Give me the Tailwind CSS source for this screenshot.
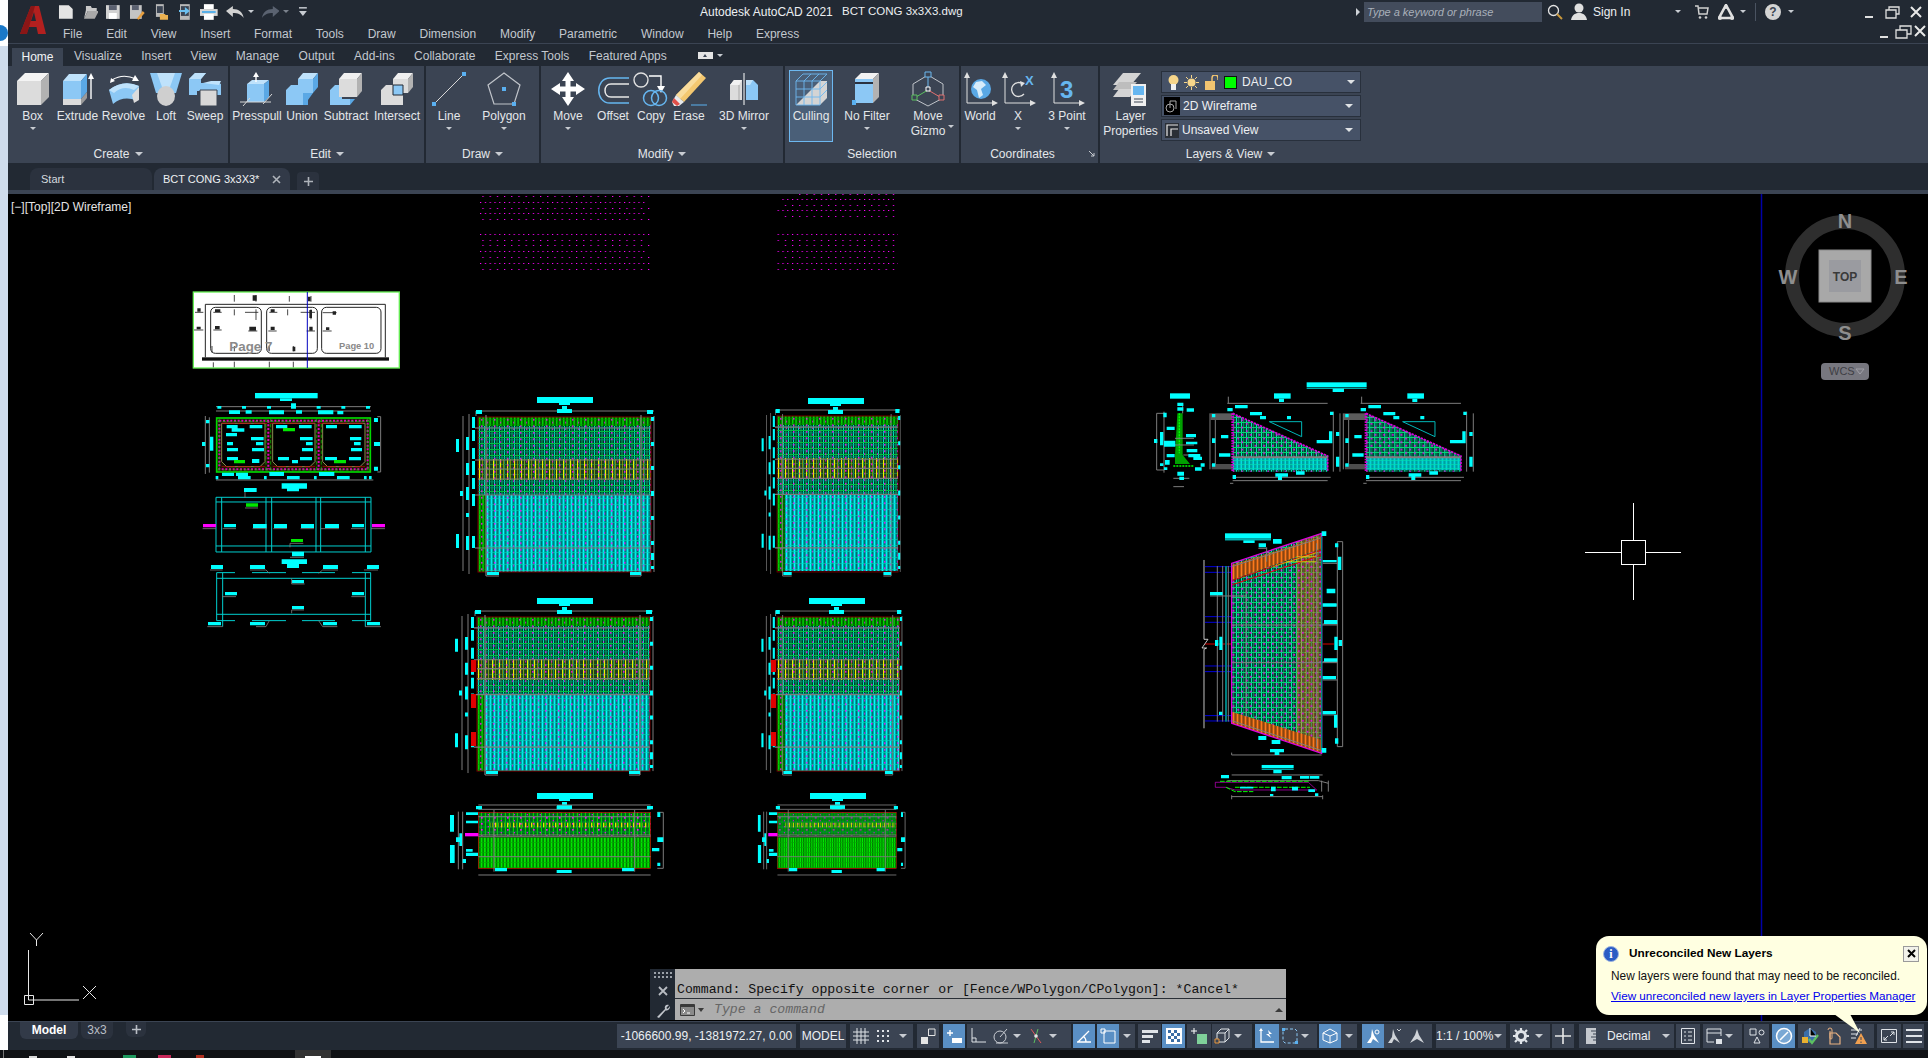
<!DOCTYPE html>
<html lang="en">
<head>
<meta charset="UTF-8">
<title>Autodesk AutoCAD 2021 - BCT CONG 3x3X3.dwg</title>
<script src="https://cdn.jsdelivr.net/npm/@tailwindcss/browser@4"></script>
</head>
<body class="w-[1928px] h-[1058px] overflow-hidden bg-[#101215] text-[12px] text-[#dfe3e8] font-['Liberation_Sans',sans-serif]">
<div class="flex h-[1050px]">
  <!-- desktop sliver on the left -->
  <aside class="w-2 flex flex-col bg-[#cfdcec]">
    <div class="h-[46px] bg-white flex items-center"><div class="w-2 h-4 mt-5 rounded-r-full bg-[#1a78c8]"></div></div>
    <div class="flex-1"></div>
    <div class="h-[35px] bg-white"></div>
  </aside>

  <main class="w-[1920px] flex flex-col relative">
    <!-- title + menu -->
    <header class="h-[44px] flex bg-[#222933] border-b border-[#3b4453]">
      <div class="w-[48px] flex justify-center pt-[5px] pl-[1px]">
        <svg class="w-[26px] h-[30px]" viewBox="0 0 26 30"><path d="M0 29 L11 1 H19 L26 29 H18 L16.5 22 H9 L6.5 29Z" fill="#b3201f"/><path d="M11 1 H15 L7 29 H0Z" fill="#8a1616"/><path d="M11 16 L14 7 L16 16Z" fill="#222933"/></svg>
      </div>
      <div class="flex-1 flex flex-col">
        <div class="h-[22px] flex items-center pt-px">
          <div class="flex items-center w-[252px] pl-[2px]">
            <svg class="w-4 h-4 mr-[9px]" viewBox="0 0 16 16"><path d="M1 1H11L15 5V15H1Z" fill="#e4e4e4"/></svg>
            <svg class="w-4 h-4 mr-[7px]" viewBox="0 0 16 16"><path d="M3 2H8L9 4H14V7H5L1 15 3 6Z" fill="#c9c9c9"/><path d="M5 7H16L12 15H1Z" fill="#a9a9a9"/></svg>
            <svg class="w-4 h-4 mr-2" viewBox="0 0 16 16"><path d="M1 1H15V15H1Z" fill="#d2d2d2"/><path d="M4 1H12V6H4Z" fill="#5a6070"/><path d="M4 9H12V15H4Z" fill="#fff"/></svg>
            <svg class="w-4 h-4 mr-2" viewBox="0 0 16 16"><path d="M1 1H13V15H1Z" fill="#c4c4c4"/><path d="M3 1H10V6H3Z" fill="#5a6070"/><path d="M8 15 L14 7 L16 9 L10 16Z" fill="#e8a040"/></svg>
            <svg class="w-4 h-4 mr-[11px]" viewBox="0 0 16 16"><path d="M3 0H11V13H3Z" fill="#b9b9b9"/><path d="M4 2H10V9H4Z" fill="#3b4453"/><path d="M7 10H12L13 11H16V16H7Z" fill="#eab050"/></svg>
            <svg class="w-3 h-4 mr-[9px]" viewBox="0 0 12 16"><path d="M1 0H11V16H1Z" fill="#b9b9b9"/><path d="M2 2H10V12H2Z" fill="#3b4453"/><path d="M0 6H6V3L11 7 6 11V8H0Z" fill="#6cc0f0"/></svg>
            <svg class="w-[18px] h-4 mr-2" viewBox="0 0 18 16"><path d="M4 0H14V5H4Z" fill="#fff"/><path d="M0 5H18V12H0Z" fill="#d8d8d8"/><path d="M4 10H14V16H4Z" fill="#fff"/><path d="M2 7H16V9H2Z" fill="#5ab0e8"/></svg>
            <svg class="w-[18px] h-3 mr-1" viewBox="0 0 18 12"><path d="M7 0V3C13 3 17 6 18 12 15 8 12 7 7 7V11L0 5Z" fill="#d2d2d2"/></svg>
            <span class="border-x-[3px] border-t-[3px] border-x-transparent border-t-[#c8ccd2] mr-2"></span>
            <svg class="w-[18px] h-3 mr-1" viewBox="0 0 18 12"><path d="M11 0V3C5 3 1 6 0 12 3 8 6 7 11 7V11L18 5Z" fill="#5a6270"/></svg>
            <span class="border-x-[3px] border-t-[3px] border-x-transparent border-t-[#7a818c] mr-[9px]"></span>
            <svg class="w-[10px] h-3" viewBox="0 0 10 12"><path d="M1 1H9V2.5H1Z" fill="#c8ccd2"/><path d="M1 5H9L5 10Z" fill="#c8ccd2"/></svg>
          </div>
          <span class="ml-[392px] w-[142px] text-[#eceff2] whitespace-nowrap">Autodesk AutoCAD 2021</span>
          <span class="text-[#eceff2] text-[11.5px] whitespace-nowrap w-[514px]">BCT CONG 3x3X3.dwg</span>
          <span class="border-y-[4px] border-l-[4px] border-y-transparent border-l-[#cfd3d8] mr-[4px]"></span>
          <div class="w-[178px] h-5 bg-[#434c5c] italic text-[11px] text-[#a9b0ba] pl-[3px] leading-5 whitespace-nowrap">Type a keyword or phrase</div>
          <svg class="w-4 h-4 ml-[5px]" viewBox="0 0 16 16"><circle cx="6.5" cy="6.5" r="5" fill="none" stroke="#e4e4e4" stroke-width="1.3"/><path d="M10 10L15 15" stroke="#c8963c" stroke-width="2"/></svg>
          <svg class="w-[18px] h-[18px] ml-[7px]" viewBox="0 0 18 18"><circle cx="9" cy="5" r="4.5" fill="#e0e0e0"/><path d="M1 17C2 11 6 10 9 10S16 11 17 17Z" fill="#e0e0e0"/></svg>
          <span class="ml-[5px] w-[82px] text-[#eceff2]">Sign In</span>
          <span class="border-x-[3px] border-t-[3px] border-x-transparent border-t-[#c8ccd2] mr-[14px]"></span>
          <svg class="w-[14px] h-[14px] mr-[9px]" viewBox="0 0 14 14"><path d="M0 1H3L4 9H12L13 3H4" fill="none" stroke="#cfcfcf" stroke-width="1.5"/><circle cx="5" cy="12.5" r="1.3" fill="#cfcfcf"/><circle cx="11" cy="12.5" r="1.3" fill="#cfcfcf"/></svg>
          <svg class="w-4 h-4 mr-[6px]" viewBox="0 0 16 16"><path d="M8 1L15 14H1Z" fill="none" stroke="#e0e0e0" stroke-width="2.6"/><circle cx="8" cy="3" r="2" fill="#e0e0e0"/><circle cx="2" cy="14" r="2" fill="#e0e0e0"/><circle cx="14" cy="14" r="2" fill="#e0e0e0"/></svg>
          <span class="border-x-[3px] border-t-[3px] border-x-transparent border-t-[#c8ccd2] mr-[9px]"></span>
          <div class="w-px h-[18px] bg-[#4a5361] mr-[9px]"></div>
          <div class="w-4 h-4 rounded-full bg-[#d4d4d4] text-[#3b4453] font-bold text-[12px] leading-4 text-center mr-[7px]">?</div>
          <span class="border-x-[3px] border-t-[3px] border-x-transparent border-t-[#c8ccd2] mr-[71px]"></span>
          <svg class="w-[60px] h-[14px]" viewBox="0 0 60 14"><path d="M0 12H8" stroke="#e0e0e0" stroke-width="2"/><path d="M21 5H31V13H21ZM24 5V2H34V9H31" fill="none" stroke="#e0e0e0" stroke-width="1.3"/><path d="M46 2L56 12M56 2L46 12" stroke="#e8e8e8" stroke-width="2"/></svg>
        </div>
        <div class="h-[21px] flex items-center relative pt-[2px]">
          <nav class="flex gap-[23.8px] pl-[7px] text-[#c3c8cf] whitespace-nowrap">
            <span>File</span><span>Edit</span><span>View</span><span>Insert</span><span>Format</span><span>Tools</span><span>Draw</span><span>Dimension</span><span>Modify</span><span>Parametric</span><span>Window</span><span>Help</span><span>Express</span>
          </nav>
          <svg class="absolute right-[2px] top-[2px] w-[46px] h-[15px]" viewBox="0 0 46 15"><path d="M0 13H8" stroke="#e0e0e0" stroke-width="2"/><path d="M16 6H27V14H16ZM20 6V2H31V10H27" fill="none" stroke="#e0e0e0" stroke-width="1.3"/><path d="M35 2L45 12M45 2L35 12" stroke="#e8e8e8" stroke-width="2"/></svg>
        </div>
      </div>
    </header>

    <!-- ribbon tabs -->
    <div class="h-[22px] flex items-end bg-[#222933] text-[#c3c8cf] whitespace-nowrap">
      <div class="ml-[4px] w-[51px] h-[18px] bg-[#3b4453] text-[#f2f4f6] text-center leading-[18px]">Home</div>
      <nav class="flex gap-[19.4px] pl-[11px] h-[22px] items-center pt-px">
        <span>Visualize</span><span>Insert</span><span>View</span><span>Manage</span><span>Output</span><span>Add-ins</span><span>Collaborate</span><span>Express Tools</span><span>Featured Apps</span>
      </nav>
      <div class="h-[22px] flex items-center ml-[31px]">
        <div class="w-[15px] h-[7px] bg-[#e4e4e4] flex justify-center items-center"><span class="border-x-[2px] border-b-[3px] border-x-transparent border-b-[#3b4453]"></span></div>
        <span class="ml-[4px] border-x-[3px] border-t-[3px] border-x-transparent border-t-[#c8ccd2]"></span>
      </div>
    </div>

    <!-- ribbon panels -->
    <section class="h-[97px] flex gap-[2px] bg-[#222933] text-[#e4e7ea] whitespace-nowrap">
      <!-- Create -->
      <div class="w-[220px] bg-[#3b4453] flex flex-col">
        <div class="h-[79px] flex pl-[2px] pt-[5px]">
          <div class="w-[45px] flex flex-col items-center">
            <svg class="w-9 h-9" viewBox="0 0 36 36"><path d="M2 10L10 2H34L26 10Z" fill="#f4f4f4"/><path d="M2 10H26V34H2Z" fill="#dcdcdc"/><path d="M26 10L34 2V26L26 34Z" fill="#b2b2b2"/></svg>
            <span class="mt-[2px] leading-[15px]">Box</span><span class="mt-[3px] border-x-[3px] border-t-[3px] border-x-transparent border-t-[#c8ccd2]"></span>
          </div>
          <div class="w-[45px] flex flex-col items-center">
            <svg class="w-9 h-9" viewBox="0 0 36 36"><path d="M3 10L9 3H27L21 10Z" fill="#bfe2fb"/><path d="M3 10H21V28H3Z" fill="#8cc8f5"/><path d="M21 10L27 3V21L21 28Z" fill="#5aa8e5"/><path d="M3 28H21V34H3Z" fill="#dcdcdc"/><path d="M21 28L27 21V27L21 34Z" fill="#9a9a9a"/><path d="M31 28V7" stroke="#fff" stroke-width="1.4"/><path d="M28 8L31 2 34 8Z" fill="#fff"/></svg>
            <span class="mt-[2px] leading-[15px]">Extrude</span>
          </div>
          <div class="w-[47px] flex flex-col items-center">
            <svg class="w-9 h-9" viewBox="0 0 36 36"><path d="M3 19Q17 8 33 15L31 30Q18 24 7 33Z" fill="#8cc8f5"/><path d="M3 19Q17 8 33 15L28 19Q17 14 8 22Z" fill="#bfe2fb"/><path d="M26 24L33 16V29L28 32Z" fill="#dcdcdc"/><path d="M6 9Q17 2 30 8" fill="none" stroke="#fff" stroke-width="1.2"/><path d="M29 4L33 10 26 10Z" fill="#fff"/><path d="M4 12L5 7 9 10Z" fill="#fff"/></svg>
            <span class="mt-[2px] leading-[15px]">Revolve</span>
          </div>
          <div class="w-[38px] flex flex-col items-center">
            <svg class="w-9 h-9" viewBox="0 0 36 36"><path d="M2 2H34L28 22H8Z" fill="#8cc8f5"/><path d="M9 2H27L22 16H14Z" fill="#bfe2fb"/><ellipse cx="18" cy="25" rx="9" ry="10" fill="#cfcfcf"/></svg>
            <span class="mt-[2px] leading-[15px]">Loft</span>
          </div>
          <div class="w-[40px] flex flex-col items-center">
            <svg class="w-9 h-9" viewBox="0 0 36 36"><path d="M2 8L8 2H19L14 8 14 12H32L34 13V24H24V20H10V24H2Z" fill="#8cc8f5"/><path d="M2 8L8 2H19L14 8Z" fill="#bfe2fb"/><path d="M16 12L24 10H34L32 14Z" fill="#bfe2fb"/><path d="M13 19H30V35H13Z" fill="#d8d8d8" stroke="#3b4453"/></svg>
            <span class="mt-[2px] leading-[15px]">Sweep</span>
          </div>
        </div>
        <div class="h-[17px] flex items-center justify-center gap-[5px]"><span>Create</span><span class="border-x-[4px] border-t-[4px] border-x-transparent border-t-[#c8ccd2]"></span></div>
      </div>
      <!-- Edit -->
      <div class="w-[194px] bg-[#3b4453] flex flex-col">
        <div class="h-[79px] flex pl-[2px] pt-[5px]">
          <div class="w-[50px] flex flex-col items-center">
            <svg class="w-9 h-9" viewBox="0 0 36 36"><path d="M8 13L13 9H30L25 13Z" fill="#bfe2fb"/><path d="M8 13H25V31H8Z" fill="#8cc8f5"/><path d="M25 13L30 9V26L25 31Z" fill="#5aa8e5"/><path d="M1 31H32M4 35L11 27M24 33L33 23" stroke="#d8d8d8"/><path d="M17 11V5" stroke="#fff" stroke-width="1.4"/><path d="M14 6L17 1 20 6Z" fill="#fff"/></svg>
            <span class="mt-[2px] leading-[15px]">Presspull</span>
          </div>
          <div class="w-[40px] flex flex-col items-center">
            <svg class="w-9 h-9" viewBox="0 0 36 36"><path d="M14 8L19 2H34L29 8Z" fill="#bfe2fb"/><path d="M14 8H29V22H14Z" fill="#8cc8f5"/><path d="M29 8L34 2V16L29 22Z" fill="#5aa8e5"/><path d="M2 19L7 14H14V22H24L19 34H2Z" fill="#8cc8f5"/><path d="M19 22H29L24 29V34H19Z" fill="#5aa8e5"/></svg>
            <span class="mt-[2px] leading-[15px]">Union</span>
          </div>
          <div class="w-[48px] flex flex-col items-center">
            <svg class="w-9 h-9" viewBox="0 0 36 36"><path d="M2 19L7 14H14V28H22V34H2Z" fill="#8cc8f5"/><path d="M22 28H27L22 34Z" fill="#5aa8e5"/><path d="M11 8L16 2H34L29 8Z" fill="#f0f0f0"/><path d="M11 8H29V26H11Z" fill="#dcdcdc"/><path d="M29 8L34 2V20L29 26Z" fill="#b2b2b2"/></svg>
            <span class="mt-[2px] leading-[15px]">Subtract</span>
          </div>
          <div class="w-[54px] flex flex-col items-center">
            <svg class="w-9 h-9" viewBox="0 0 36 36"><path d="M14 8L19 2H34L29 8Z" fill="#f0f0f0"/><path d="M14 8H29V22H14Z" fill="#dcdcdc"/><path d="M29 8L34 2V16L29 22Z" fill="#b2b2b2"/><path d="M2 19L7 14H14V22H24V34H2Z" fill="#dcdcdc"/><path d="M14 14H24V24H14Z" fill="#8cc8f5" stroke="#222933"/></svg>
            <span class="mt-[2px] leading-[15px]">Intersect</span>
          </div>
        </div>
        <div class="h-[17px] flex items-center justify-center gap-[5px]"><span>Edit</span><span class="border-x-[4px] border-t-[4px] border-x-transparent border-t-[#c8ccd2]"></span></div>
      </div>
      <!-- Draw -->
      <div class="w-[113px] bg-[#3b4453] flex flex-col">
        <div class="h-[79px] flex pt-[5px]">
          <div class="w-[46px] flex flex-col items-center">
            <svg class="w-9 h-9" viewBox="0 0 36 36"><path d="M3 33L33 3" stroke="#d8d8d8"/><path d="M1 31H5V35H1ZM31 1H35V5H31Z" fill="#5ab0f0"/></svg>
            <span class="mt-[2px] leading-[15px]">Line</span><span class="mt-[3px] border-x-[3px] border-t-[3px] border-x-transparent border-t-[#c8ccd2]"></span>
          </div>
          <div class="w-[64px] flex flex-col items-center">
            <svg class="w-9 h-9" viewBox="0 0 36 36"><path d="M18 2L34 14 28 33H8L2 14Z" fill="none" stroke="#c0c4ca" stroke-width="1.2"/><path d="M16 16H20V20H16ZM26 31H30V35H26Z" fill="#5ab0f0"/></svg>
            <span class="mt-[2px] leading-[15px]">Polygon</span><span class="mt-[3px] border-x-[3px] border-t-[3px] border-x-transparent border-t-[#c8ccd2]"></span>
          </div>
        </div>
        <div class="h-[17px] flex items-center justify-center gap-[5px]"><span>Draw</span><span class="border-x-[4px] border-t-[4px] border-x-transparent border-t-[#c8ccd2]"></span></div>
      </div>
      <!-- Modify -->
      <div class="w-[242px] bg-[#3b4453] flex flex-col">
        <div class="h-[79px] flex pl-[4px] pt-[5px]">
          <div class="w-[46px] flex flex-col items-center">
            <svg class="w-9 h-9" viewBox="0 0 36 36"><path d="M18 1L24 10H20.5V15.5H26V12L35 18 26 24V20.5H20.5V26H24L18 35 12 26H15.5V20.5H10V24L1 18 10 12V15.5H15.5V10H12Z" fill="#fff"/></svg>
            <span class="mt-[2px] leading-[15px]">Move</span><span class="mt-[3px] border-x-[3px] border-t-[3px] border-x-transparent border-t-[#c8ccd2]"></span>
          </div>
          <div class="w-[44px] flex flex-col items-center">
            <svg class="w-9 h-9" viewBox="0 0 36 36"><path d="M34 7H15C0 7 0 32 15 32H34" fill="none" stroke="#66b6f0" stroke-width="1.5"/><path d="M34 13H16C8 13 8 26 16 26H34" fill="none" stroke="#e8e8e8" stroke-width="1.5"/></svg>
            <span class="mt-[2px] leading-[15px]">Offset</span>
          </div>
          <div class="w-[32px] flex flex-col items-center">
            <svg class="w-9 h-9" viewBox="0 0 36 36"><circle cx="8" cy="9" r="7" fill="none" stroke="#e0e0e0" stroke-width="1.4"/><path d="M16 5H28V15" fill="none" stroke="#fff" stroke-width="1.4"/><path d="M24 15H32L28 22Z" fill="#fff"/><circle cx="18" cy="27" r="7.5" fill="none" stroke="#66b6f0" stroke-width="1.5"/><circle cx="26" cy="27" r="7.5" fill="none" stroke="#66b6f0" stroke-width="1.5"/></svg>
            <span class="mt-[2px] leading-[15px]">Copy</span>
          </div>
          <div class="w-[44px] flex flex-col items-center">
            <svg class="w-9 h-9" viewBox="0 0 36 36"><path d="M28 1L35 7 13 31 5 24Z" fill="#f4c870"/><path d="M28 1L31 4 9 28 5 24Z" fill="#f9dc9c"/><path d="M5 24L13 31 8 35H3L1 31Z" fill="#e8eaec"/><path d="M3 27L9 33 6 35 1 31Z" fill="#e0504a"/><path d="M20 34H36" stroke="#5ab0f0"/></svg>
            <span class="mt-[2px] leading-[15px]">Erase</span>
          </div>
          <div class="w-[66px] flex flex-col items-center">
            <svg class="w-9 h-9" viewBox="0 0 36 36"><path d="M4 14L8 9H16V29H4Z" fill="#dcdcdc"/><path d="M4 14L8 9H16L13 14Z" fill="#f2f2f2"/><path d="M13 14V29" stroke="#a8a8a8"/><path d="M18 2V34" stroke="#fff"/><path d="M20 9H27L32 14V29H20Z" fill="#8cc8f5"/><path d="M20 9H27L24 14H20Z" fill="#bfe2fb"/></svg>
            <span class="mt-[2px] leading-[15px]">3D Mirror</span><span class="mt-[3px] border-x-[3px] border-t-[3px] border-x-transparent border-t-[#c8ccd2]"></span>
          </div>
        </div>
        <div class="h-[17px] flex items-center justify-center gap-[5px]"><span>Modify</span><span class="border-x-[4px] border-t-[4px] border-x-transparent border-t-[#c8ccd2]"></span></div>
      </div>
      <!-- Selection -->
      <div class="w-[174px] bg-[#3b4453] flex flex-col">
        <div class="h-[79px] flex pl-[4px] pt-[4px]">
          <div class="w-[44px] h-[72px] flex flex-col items-center bg-[#4a5f78] border border-[#6db8f0]">
            <svg class="w-9 h-9" viewBox="0 0 36 36"><path d="M3 34V10L10 3H34V27L27 34Z" fill="#4a5f78"/><path d="M27 34H3L27 10H34V27Z" fill="#d4d4d4"/><path d="M3 10H27V34H3ZM27 10L34 3H10L3 10M11 10V34M19 10V34M3 18H27M3 26H27M11 10L18 3M19 10L26 3M27 18L34 11M27 26L34 19" fill="none" stroke="#6db8f0" stroke-width=".9"/></svg>
            <span class="mt-[2px] leading-[15px]">Culling</span>
          </div>
          <div class="w-[68px] flex flex-col items-center pt-px">
            <svg class="w-9 h-9" viewBox="0 0 36 36"><path d="M6 8L12 2H30L24 8Z" fill="#f2f2f2"/><path d="M24 8L30 2V26L24 32Z" fill="#b2b2b2"/><path d="M6 8H24V32H6Z" fill="#8cc8f5"/><path d="M6 11H24V13H6Z" fill="#2a3240"/><path d="M3 29H7V34H3Z" fill="#5ab0f0"/></svg>
            <span class="mt-[2px] leading-[15px]">No Filter</span><span class="mt-[3px] border-x-[3px] border-t-[3px] border-x-transparent border-t-[#c8ccd2]"></span>
          </div>
          <div class="w-[54px] flex flex-col items-center pt-px relative">
            <svg class="w-9 h-9" viewBox="0 0 36 36"><path d="M18 4L33 13V27L18 35 3 27V13Z" fill="none" stroke="#c0c4ca"/><path d="M18 6V18" stroke="#6db8f0"/><path d="M18 19L6 26" stroke="#5cc060"/><path d="M18 19L30 26" stroke="#e07070"/><path d="M15 1H21V6H15Z" fill="#3b4453" stroke="#6db8f0"/><path d="M16 16H20V20H16Z" fill="#3b4453" stroke="#fff"/><path d="M2 24H7V29H2Z" fill="#3b4453" stroke="#5cc060"/><path d="M29 24H34V29H29Z" fill="#3b4453" stroke="#e07070"/></svg>
            <span class="mt-[2px] leading-[15px]">Move</span><span class="leading-[15px]">Gizmo</span>
            <span class="absolute right-[1px] top-[55px] border-x-[3px] border-t-[3px] border-x-transparent border-t-[#c8ccd2]"></span>
          </div>
        </div>
        <div class="h-[17px] flex items-center justify-center"><span>Selection</span></div>
      </div>
      <!-- Coordinates -->
      <div class="w-[137px] bg-[#3b4453] flex flex-col">
        <div class="h-[79px] flex pt-[5px]">
          <div class="w-[38px] flex flex-col items-center">
            <svg class="w-9 h-9" viewBox="0 0 36 36"><path d="M5 3V32H33" fill="none" stroke="#e0e0e0"/><path d="M2 7L5 1 8 7ZM30 29L36 32 30 35Z" fill="#e0e0e0"/><circle cx="19" cy="18" r="10" fill="#5aa8e5"/><path d="M14 11L20 10 24 14 19 18 21 24 17 27 15 19 11 16Z" fill="#d6ecfb"/></svg>
            <span class="mt-[2px] leading-[15px]">World</span>
          </div>
          <div class="w-[38px] flex flex-col items-center">
            <svg class="w-9 h-9" viewBox="0 0 36 36"><path d="M5 3V32H33" fill="none" stroke="#e0e0e0"/><path d="M2 7L5 1 8 7ZM30 29L36 32 30 35Z" fill="#e0e0e0"/><path d="M23 13A7 7 0 1 0 24 23" fill="none" stroke="#e0e0e0" stroke-width="1.3"/><path d="M20 10L25 12 21 16Z" fill="#e0e0e0"/><text x="25" y="14" font-size="13" font-weight="700" fill="#66b6f0" font-family="Liberation Sans">X</text></svg>
            <span class="mt-[2px] leading-[15px]">X</span><span class="mt-[3px] border-x-[3px] border-t-[3px] border-x-transparent border-t-[#c8ccd2]"></span>
          </div>
          <div class="w-[60px] flex flex-col items-center">
            <svg class="w-9 h-9" viewBox="0 0 36 36"><path d="M5 3V32H33" fill="none" stroke="#e0e0e0"/><path d="M2 7L5 1 8 7ZM30 29L36 32 30 35Z" fill="#e0e0e0"/><text x="11" y="27" font-size="24" font-weight="700" fill="#66b6f0" font-family="Liberation Sans">3</text></svg>
            <span class="mt-[2px] leading-[15px]">3 Point</span><span class="mt-[3px] border-x-[3px] border-t-[3px] border-x-transparent border-t-[#c8ccd2]"></span>
          </div>
        </div>
        <div class="h-[17px] flex items-center justify-center relative pr-[14px]"><span>Coordinates</span>
          <svg class="absolute right-[3px] top-[5px] w-[7px] h-[7px]" viewBox="0 0 7 7"><path d="M1 1L6 6M3 6H6V3" fill="none" stroke="#c8ccd2"/></svg>
        </div>
      </div>
      <!-- Layers & View -->
      <div class="flex-1 bg-[#3b4453] flex flex-col">
        <div class="h-[79px] flex pt-[5px]">
          <div class="w-[61px] flex flex-col items-center">
            <svg class="w-9 h-9" viewBox="0 0 36 36"><path d="M10 2H28L18 14H0Z" fill="#d4d4d4"/><path d="M6 11H24L17 19H0Z" fill="#bdbdbd"/><path d="M6 18H24L17 26H0Z" fill="#d4d4d4"/><path d="M18 13H33V35H18Z" fill="#f0f0f0"/><path d="M20 15H31V24H20Z" fill="#66b6f0"/><path d="M21 28H30M21 31H30" stroke="#3b4453"/></svg>
            <span class="mt-[2px] leading-[15px]">Layer</span><span class="leading-[15px]">Properties</span>
          </div>
          <div class="w-[200px] flex flex-col gap-[2px]">
            <div class="h-[22px] bg-[#465267] border border-[#28303c] flex items-center pl-[6px] pr-[5px] text-[#eef0f2]">
              <svg class="w-[11px] h-[15px]" viewBox="0 0 11 15"><circle cx="5.5" cy="5" r="5" fill="#f6d58a"/><path d="M3 9H8V15H3Z" fill="#f0f0f0"/></svg>
              <svg class="w-[15px] h-[15px] ml-[5px]" viewBox="0 0 15 15"><circle cx="7.5" cy="7.5" r="4" fill="#f6d58a"/><path d="M7.5 0V3M7.5 12V15M0 7.5H3M12 7.5H15M2 2L4 4M11 11L13 13M2 13L4 11M11 4L13 2" stroke="#f6d58a"/></svg>
              <svg class="w-[14px] h-[15px] ml-[5px]" viewBox="0 0 14 15"><path d="M8 6V3A3 3 0 0 1 14 3V5" fill="none" stroke="#f6c870" stroke-width="1.4"/><path d="M1 6H11V15H1Z" fill="#f2c470"/></svg>
              <div class="w-[13px] h-[13px] bg-[#00ff00] border border-[#111] ml-[6px]"></div>
              <span class="ml-[5px] flex-1">DAU_CO</span>
              <span class="border-x-[4px] border-t-[4px] border-x-transparent border-t-[#e0e3e6]"></span>
            </div>
            <div class="h-[22px] bg-[#465267] border border-[#28303c] flex items-center pl-[2px] pr-[7px] text-[#eef0f2]">
              <svg class="w-4 h-[18px] bg-black" viewBox="0 0 16 18"><circle cx="6" cy="11" r="4" fill="none" stroke="#a8a8a8"/><path d="M6 11V4H12V12" fill="none" stroke="#a8a8a8"/></svg>
              <span class="ml-[3px] flex-1">2D Wireframe</span>
              <span class="border-x-[4px] border-t-[4px] border-x-transparent border-t-[#e0e3e6]"></span>
            </div>
            <div class="h-[22px] bg-[#465267] border border-[#28303c] flex items-center pl-[3px] pr-[7px] text-[#eef0f2]">
              <svg class="w-[14px] h-[15px] bg-[#2a2f36]" viewBox="0 0 14 15"><path d="M2 13V2H13M6 13V6H13" fill="none" stroke="#e8e8e8" stroke-width="1.2"/></svg>
              <span class="ml-[3px] flex-1">Unsaved View</span>
              <span class="border-x-[4px] border-t-[4px] border-x-transparent border-t-[#e0e3e6]"></span>
            </div>
          </div>
        </div>
        <div class="w-[261px] h-[17px] flex items-center justify-center gap-[5px]"><span>Layers &amp; View</span><span class="border-x-[4px] border-t-[4px] border-x-transparent border-t-[#c8ccd2]"></span></div>
      </div>
    </section>

    <!-- file tabs -->
    <div class="h-[27px] flex items-end bg-[#222933] pl-[22px] text-[#d5d9de] text-[11px] whitespace-nowrap">
      <div class="w-[122px] h-[22px] bg-[#2b323e] rounded-t-lg pl-[11px] leading-[22px] mb-0">Start</div>
      <div class="w-[136px] h-[22px] bg-[#323a48] rounded-t-lg ml-[2px] flex items-center pl-[9px] text-[#eef0f2]">
        <span class="w-[109px]">BCT CONG 3x3X3*</span>
        <svg class="w-[9px] h-[9px]" viewBox="0 0 9 9"><path d="M1 1L8 8M8 1L1 8" stroke="#aeb3ba" stroke-width="1.6"/></svg>
      </div>
      <div class="w-[22px] h-[18px] bg-[#2b323e] rounded-t ml-[7px] flex items-center justify-center">
        <svg class="w-[9px] h-[9px]" viewBox="0 0 9 9"><path d="M4.5 0V9M0 4.5H9" stroke="#aeb3ba" stroke-width="1.6"/></svg>
      </div>
    </div>
    <div class="h-1 bg-[#3b4453]"></div>

    <!-- model space -->
    <div class="h-[827px] relative bg-black">
      <svg class="absolute inset-0" width="1920" height="827" viewBox="8 194 1920 827" font-family="Liberation Sans">
        <defs>
          <pattern id="dots7" width="7.2" height="1" patternUnits="userSpaceOnUse"><rect width="1.2" height="1" fill="#ff00ff"/></pattern>
          <pattern id="dots4" width="4.8" height="1" patternUnits="userSpaceOnUse"><rect width="1.2" height="1" fill="#ff00ff"/></pattern>
          <pattern id="gridA" width="5" height="6" patternUnits="userSpaceOnUse"><rect width="5" height="6" fill="#013a2a"/><rect x="1" width="1" height="6" fill="#00e0c0"/><rect x="3.5" width="1" height="6" fill="#00b060"/><rect y="2" width="5" height="1" fill="#00c040"/><rect y="4.5" width="5" height=".7" fill="#00907a"/></pattern>
          <pattern id="gridAn" width="7" height="6" patternUnits="userSpaceOnUse"><rect width="7" height="6" fill="#013a2a"/><rect x="1.4" width="1.4" height="6" fill="#00e0c0"/><rect x="4.9" width="1.4" height="6" fill="#00b060"/><rect y="2" width="7" height="1" fill="#00c040"/><rect y="4.5" width="7" height=".7" fill="#00907a"/></pattern>
          <pattern id="gridB" width="8" height="6" patternUnits="userSpaceOnUse"><rect width="8" height="6" fill="#00a8a8"/><rect x="1" width="1" height="6" fill="#00ffff"/><rect x="3" width="1" height="6" fill="#007c7c"/><rect x="5" width="1" height="6" fill="#00f0f0"/><rect x="7" width="1" height="6" fill="#006e6e"/><rect y="3" width="8" height=".6" fill="#00d8b8"/></pattern>
          <pattern id="gridBn" width="11.4" height="6" patternUnits="userSpaceOnUse"><rect width="11.4" height="6" fill="#00a8a8"/><rect x="1.4" width="1.4" height="6" fill="#00ffff"/><rect x="4.3" width="1.4" height="6" fill="#007c7c"/><rect x="7.1" width="1.4" height="6" fill="#00f0f0"/><rect x="10" width="1.4" height="6" fill="#006e6e"/><rect y="3" width="11.4" height=".6" fill="#00d8b8"/></pattern>
          <pattern id="gridG" width="3.5" height="5" patternUnits="userSpaceOnUse"><rect width="3.5" height="5" fill="#005a00"/><rect x="1" width="1.3" height="5" fill="#00f000"/><rect y="2" width="3.5" height=".5" fill="#009000"/></pattern>
          <pattern id="gridS" width="5" height="5" patternUnits="userSpaceOnUse"><rect width="5" height="5" fill="#02362a"/><rect x="1" width="1" height="5" fill="#00c89a"/><rect y="2" width="5" height="1" fill="#00a860"/></pattern>
          <pattern id="gridS3" width="15" height="15" patternUnits="userSpaceOnUse"><rect width="15" height="15" fill="#024434"/><rect x="3" width="3" height="15" fill="#00f0b0"/><rect x="10" width="2" height="15" fill="#00a868"/><rect y="6" width="15" height="3" fill="#00d870"/></pattern>
          <pattern id="gridO3" width="12" height="12" patternUnits="userSpaceOnUse"><rect width="12" height="12" fill="#8a4410"/><rect x="2" width="5" height="12" fill="#ff7a1c"/></pattern>
          <pattern id="gridB3" width="12" height="12" patternUnits="userSpaceOnUse"><rect width="12" height="12" fill="#00a0a0"/><rect x="2" width="3" height="12" fill="#00ffff"/><rect y="6" width="12" height="2" fill="#00e0b0"/></pattern>
          <pattern id="gridG3" width="10" height="15" patternUnits="userSpaceOnUse"><rect width="10" height="15" fill="#007000"/><rect x="2" width="5" height="15" fill="#00f000"/><rect y="6" width="10" height="2" fill="#00a800"/></pattern>
          <pattern id="gridT3" width="12" height="15" patternUnits="userSpaceOnUse"><rect width="12" height="15" fill="#00500a"/><rect x="2" width="4" height="15" fill="#00d800"/><rect x="8" width="2" height="15" fill="#008848"/><rect y="5" width="12" height="2" fill="#00a040"/></pattern>
          <pattern id="yel" width="7" height="21" patternUnits="userSpaceOnUse"><rect x="1" width="1.1" height="21" fill="#f0f000"/><rect x="4" width=".7" height="21" fill="#a8a800"/></pattern>
          <pattern id="yel3" width="18" height="14" patternUnits="userSpaceOnUse"><rect x="3" width="4" height="14" fill="#e8e800"/><rect x="12" width="2" height="14" fill="#a8a800"/></pattern>
          <pattern id="mag" width="13" height="6.5" patternUnits="userSpaceOnUse"><rect x="3" y="2" width="1.5" height="1.5" fill="#ff00ff"/><rect x="9" y="5" width="1.2" height="1.2" fill="#ff00ff"/></pattern>
          <pattern id="mag3" width="39" height="18" patternUnits="userSpaceOnUse"><rect x="6" y="3" width="5" height="5" fill="#ff00ff"/><rect x="26" y="12" width="4" height="4" fill="#e000e0"/></pattern>
          <pattern id="magS" width="26" height="22" patternUnits="userSpaceOnUse"><rect x="6" y="5" width="5" height="5" fill="#f000f0"/><rect x="18" y="16" width="5" height="5" fill="#f000f0"/></pattern>

          <g id="ptitle"><rect x="-28" y="0" width="56" height="6" fill="#00ffff"/><rect x="-6" y="6" width="11" height="2" fill="#00ffff"/><rect x="-3" y="9" width="5" height="3" fill="#00ffff"/><rect x="-8" y="12" width="15" height="4" fill="#00ffff"/></g>

          <g id="fillW">
            <rect width="173" height="155" fill="url(#gridA)"/>
            <rect width="173" height="9" fill="url(#gridG)"/>
            <rect y="42" width="173" height="21" fill="#3a4a10"/>
            <rect y="42" width="173" height="21" fill="url(#gridS)" opacity=".5"/>
            <rect y="42" width="173" height="21" fill="url(#yel)"/>
            <rect y="78" width="173" height="77" fill="url(#gridB)"/>
            <rect y="78" width="8" height="77" fill="url(#gridG)"/>
            <rect width="173" height="155" fill="url(#mag)"/>
          </g>
          <g id="fillN">
            <rect width="173" height="155" fill="url(#gridAn)"/>
            <rect width="173" height="9" fill="url(#gridG)"/>
            <rect y="42" width="173" height="21" fill="#3a4a10"/>
            <rect y="42" width="173" height="21" fill="url(#yel)"/>
            <rect y="78" width="173" height="77" fill="url(#gridBn)"/>
            <rect y="78" width="11" height="77" fill="url(#gridG)"/>
            <rect width="173" height="155" fill="url(#mag)"/>
          </g>
          <g id="panel">
            <rect width="173" height="155" fill="none" stroke="#7a0000"/>
            <path d="M-3 11H173M-3 43H173M0 52H173M0 62H173M-3 78H173M-3 131H173M8 -2V159M163 -2V159" stroke="#7c7c7c" stroke-width="1.2" fill="none"/>
            <path d="M-2 -6H176M-2 -6V-1M-15 -1V154M-9 -3V157M176 -1V155M8 159H21M152 159H163" stroke="#7c7c7c" fill="none"/>
            <path d="M-2 -7h6v4h-6zM169 -7h6v4h-6zM-12 20h3v13h-3zM-12 46h3v12h-3zM-12 70h3v13h-3zM-12 119h3v14h-3zM-12 96h3v4h-3zM-6 0h3v11h-3zM-6 13h3v11h-3zM-6 31h3v11h-3zM-6 44h3v14h-3zM-6 61h3v11h-3zM-6 77h3v12h-3zM-6 119h3v12h-3zM-22 22h3v13h-3zM-22 117h3v14h-3zM-18 74h3v5h-3zM173 0h3v4h-3zM173 25h3v4h-3zM173 49h3v4h-3zM173 74h3v5h-3zM173 99h3v4h-3zM173 124h3v4h-3zM173 136h3v7h-3zM173 149h3v3h-3zM9 155h12v3h-12zM152 155h11v3h-11z" fill="#00ffff"/>
          </g>

          <g id="low">
            <rect x="115" y="97" width="517" height="70" fill="url(#gridT3)"/>
            <rect x="115" y="97" width="517" height="70" fill="url(#mag3)"/>
            <rect x="115" y="172" width="517" height="93" fill="url(#gridG3)"/>
            <rect x="150" y="128" width="482" height="14" fill="url(#yel3)"/>
            <rect x="115" y="97" width="517" height="168" fill="none" stroke="#d00000" stroke-width="2"/>
            <path d="M115 110H632M115 165H632M115 170H632M115 230H632M162 90V275M584 90V275" stroke="#7c7c7c" stroke-width="3" fill="none"/>
            <path d="M115 75H632M115 88H632M115 285H632M55 95V268M68 95V268M670 97V265M652 97H670M652 265H670" stroke="#7c7c7c" stroke-width="3" fill="none"/>
            <path d="M108 78h18v10h-18zM350 78h45v10h-45zM621 78h18v10h-18zM350 270h45v9h-45zM165 264h36v10h-36zM546 264h36v10h-36zM30 105h12v50h-12zM30 195h14v54h-14zM58 160h8v38h-8zM48 172h10v14h-10zM78 97h36v8h-36zM78 122h36v8h-36zM78 207h20v8h-20zM78 218h36v10h-36zM68 237h10v12h-10zM652 97h9v14h-9zM652 172h18v14h-18zM636 204h22v10h-22zM652 248h9v10h-9z" fill="#00ffff"/>
            <rect x="75" y="159" width="40" height="10" fill="#ff00ff"/>
          </g>

          <g id="tri">
            <rect x="402" y="70" width="50" height="16" fill="#00ffff"/><rect x="417" y="86" width="15" height="10" fill="#00ffff"/>
            <path d="M212 130H278V150H212Z" fill="#5c5c5c"/>
            <path d="M215 282H278V298H215Z" fill="#4c4c4c"/>
            <path d="M278 130L563 258V305H278Z" fill="url(#gridS3)"/>
            <path d="M278 130L563 258V305H278Z" fill="url(#magS)"/>
            <path d="M278 262H563V300H278Z" fill="url(#gridB3)"/>
            <path d="M278 130L563 258V305" fill="none" stroke="#e000e0" stroke-width="5" stroke-dasharray="7 3"/>
            <path d="M278 130V305" stroke="#d000d0" stroke-width="8" stroke-dasharray="5 3"/>
            <path d="M278 262H563" stroke="#808080" stroke-width="6"/>
            <path d="M262 100H563M210 130V298M226 150V282M278 322H572M278 332H563M580 125V305M600 130V305M265 80V100M270 340H280" stroke="#7c7c7c" stroke-width="3" fill="none"/>
            <path d="M388 155H485V200Z" fill="none" stroke="#00b8b8" stroke-width="3"/>
            <path d="M285 105h38v10h-38zM330 126h36v10h-36zM360 138h18v10h-18zM441 138h12v10h-12zM243 195h22v10h-22zM237 250h34v10h-34zM530 210h38v10h-38zM216 132h10v10h-10zM216 205h10v14h-10zM216 280h10v10h-10zM406 310h38v10h-38zM414 320h12v10h-12zM468 304h26v10h-26zM570 125h10v10h-10zM567 184h10v36h-10zM588 186h10v12h-10zM588 260h10v30h-10zM262 114h16v10h-16zM278 315h10v12h-10z" fill="#00ffff"/>
          </g>
        </defs>

        <!-- magenta dot rows above the panels -->
        <g>
          <rect x="479" y="196" width="171" height="1" fill="url(#dots7)"/><rect x="479" y="202" width="167" height="1" fill="url(#dots4)"/><rect x="482" y="208" width="168" height="1" fill="url(#dots7)"/><rect x="479" y="213" width="168" height="1" fill="url(#dots4)"/><rect x="479" y="219" width="171" height="1" fill="url(#dots7)"/>
          <rect x="479" y="234" width="171" height="1" fill="url(#dots4)"/><rect x="479" y="240" width="167" height="1" fill="url(#dots7)"/><rect x="482" y="245" width="168" height="1" fill="url(#dots7)"/><rect x="479" y="251" width="167" height="1" fill="url(#dots4)"/><rect x="482" y="257" width="168" height="1" fill="url(#dots7)"/><rect x="479" y="263" width="171" height="1" fill="url(#dots4)"/><rect x="479" y="269" width="171" height="1" fill="url(#dots7)"/>
          <rect x="794" y="194" width="104" height="1" fill="url(#dots7)"/><rect x="782" y="199" width="112" height="1" fill="url(#dots4)"/><rect x="780" y="205" width="118" height="1" fill="url(#dots7)"/><rect x="777" y="210" width="118" height="1" fill="url(#dots4)"/><rect x="780" y="216" width="118" height="1" fill="url(#dots7)"/>
          <rect x="777" y="234" width="121" height="1" fill="url(#dots4)"/><rect x="777" y="240" width="118" height="1" fill="url(#dots7)"/><rect x="780" y="245" width="118" height="1" fill="url(#dots7)"/><rect x="777" y="251" width="118" height="1" fill="url(#dots4)"/><rect x="780" y="257" width="118" height="1" fill="url(#dots7)"/><rect x="777" y="263" width="121" height="1" fill="url(#dots4)"/><rect x="777" y="269" width="121" height="1" fill="url(#dots7)"/>
        </g>

        <!-- selected page thumbnail -->
        <g transform="translate(180 280) scale(.3333)">
          <rect x="40" y="36" width="618" height="228" fill="#fff" stroke="#66ee55" stroke-width="4"/>
          <path d="M76 232V73H616V232" fill="none" stroke="#222" stroke-width="3"/>
          <rect x="66" y="232" width="561" height="10" fill="#111"/>
          <rect x="92" y="82" width="152" height="138" rx="14" fill="none" stroke="#222" stroke-width="3"/>
          <rect x="260" y="82" width="152" height="138" rx="14" fill="none" stroke="#222" stroke-width="3"/>
          <rect x="425" y="82" width="178" height="138" rx="14" fill="none" stroke="#222" stroke-width="3"/>
          <path d="M163 45V65M228 45V65M328 48V65M393 48V65M163 88V106M228 88V120M323 88V106M393 88V118M100 247V262M163 245V262M268 245V262M340 245V262M96 198V218M163 198V214M268 198V214M340 198V214M45 97H70M42 150H70M100 150H125M205 153H232M265 153H290M380 153H405M428 153H455M428 98H470M100 97H125M195 97H235M268 97H292M362 97H405" stroke="#222" stroke-width="2.5" fill="none"/>
          <path d="M105 88h16v8h-16zM105 138h14v10h-14zM52 85h10v10h-10zM50 140h12v8h-12zM208 140h20v12h-20zM272 88h12v8h-12zM272 140h12v10h-12zM388 140h10v12h-10zM458 94h10v10h-10zM438 142h10v8h-10zM218 46h12v16h-12zM384 50h8v14h-8zM338 200h8v14h-8zM388 90h8v24h-8z" fill="#222"/>
          <text x="148" y="212" font-size="40" font-weight="700" fill="#8a8a8a">Page 7</text>
          <text x="477" y="206" font-size="28" font-weight="700" fill="#8a8a8a">Page 10</text>
          <path d="M382 36V264" stroke="#0000c0" stroke-width="3"/>
        </g>

        <!-- left sections -->
        <g transform="translate(180 280) scale(.3333)">
          <rect x="225" y="339" width="188" height="16" fill="#00ffff"/><rect x="300" y="355" width="36" height="8" fill="#00ffff"/>
          <path d="M108 380H573M108 393H573M88 412V578M76 408V582M592 410H602V576H592M108 600H580" stroke="#7c7c7c" stroke-width="3" fill="none"/>
          <rect x="110" y="414" width="461" height="162" fill="#1a1400" stroke="#00d800" stroke-width="5"/>
          <path d="M125 430H255V545L240 560H140L125 545ZM278 430H405V545L390 560H293L278 545ZM428 430H555V545L540 560H443L428 545Z" fill="#000" stroke="#8a8a50" stroke-width="3"/>
          <path d="M118 422H563V568H118ZM265 422V568M416 422V568" fill="none" stroke="#e000c0" stroke-width="6" stroke-dasharray="6 5"/>
          <path d="M118 416V576M258 416V576M272 416V576M410 416V576M424 416V576M563 416V576M112 570H570M112 424H570" fill="none" stroke="#00d800" stroke-width="2" stroke-dasharray="10 6"/>
          <path d="M125 560H255M278 560H405M428 560H555M125 430H555" stroke="#d00000" stroke-width="2" fill="none" stroke-dasharray="40 8"/>
          <path d="M112 378h12v8h-12zM186 378h12v8h-12zM261 378h12v8h-12zM333 370h15v16h-15zM410 378h12v8h-12zM484 378h12v8h-12zM558 378h12v8h-12zM147 391h33v11h-33zM197 391h18v10h-18zM267 391h45v12h-45zM348 391h18v10h-18zM414 391h46v12h-46zM472 393h18v10h-18zM140 435h33v10h-33zM155 445h38v10h-38zM209 435h38v10h-38zM288 435h34v10h-34zM357 435h38v10h-38zM438 435h33v10h-33zM507 435h38v10h-38zM138 459h33v10h-33zM213 471h38v10h-38zM360 471h38v10h-38zM510 471h34v10h-34zM141 486h18v10h-18zM228 486h22v10h-22zM378 486h20v10h-20zM522 486h20v10h-20zM141 504h33v10h-33zM216 504h36v10h-36zM366 504h33v10h-33zM513 504h33v10h-33zM141 531h33v10h-33zM216 537h22v12h-22zM294 531h33v10h-33zM336 540h18v10h-18zM360 531h36v10h-36zM435 531h36v10h-36zM507 531h36v10h-36zM126 578h36v10h-36zM168 578h36v10h-36zM268 576h44v12h-44zM417 576h46v12h-46zM174 588h38v10h-38zM321 588h38v10h-38zM471 588h38v10h-38zM107 588h8v10h-8zM252 588h8v10h-8zM402 588h8v10h-8zM552 588h8v10h-8zM567 588h8v10h-8zM66 486h10v12h-10zM90 470h10v42h-10zM78 420h10v10h-10zM78 552h10v10h-10zM582 414h12v12h-12zM582 486h18v12h-18zM582 560h12v12h-12z" fill="#00ffff"/>
          <path d="M309 444h36v10h-36zM162 540h33v10h-33zM462 540h36v10h-36z" fill="#00e800"/>
          <path d="M305 610h76v16h-76zM321 626h36v8h-36zM192 624h38v12h-38z" fill="#00ffff"/>

          <path d="M108 652H573V816H108ZM108 666H573M108 798H573M125 652V816M258 652V816M275 652V816M408 652V816M422 652V816M556 652V816" fill="none" stroke="#00d0d0" stroke-width="3"/>
          <path d="M195 636V654M195 684H234M108 746H68M573 746H615M128 746H168M218 746H261M280 746H321M362 746H402M422 746H477M513 746H553M330 802V790H370M330 832H372" stroke="#7c7c7c" stroke-width="2.5" fill="none"/>
          <path d="M132 732h36v10h-36zM219 732h41v12h-41zM282 732h39v12h-39zM363 732h39v12h-39zM435 732h42v12h-42zM516 732h36v10h-36zM336 815h36v14h-36z" fill="#00ffff"/>
          <path d="M69 732h39v10h-39zM576 732h39v10h-39z" fill="#ff00ff"/>
          <path d="M198 670h36v10h-36zM333 777h36v9h-36z" fill="#00e800"/>

          <path d="M305 838h76v14h-76zM321 852h36v12h-36zM93 855h36v12h-36zM210 855h45v12h-45zM429 855h45v12h-45zM561 855h36v12h-36zM135 936h36v10h-36zM516 936h36v10h-36zM336 900h36v10h-36zM336 978h36v10h-36zM84 1026h39v10h-39zM210 1026h45v10h-45zM429 1026h42v10h-42zM561 1026h39v10h-39z" fill="#00ffff"/>
          <path d="M110 878H165M216 878H318M366 878H465M516 878H572M110 895H572M110 1003H572M110 1022H165M216 1022H318M366 1022H465M516 1022H572M110 878V1022M128 878V1040M556 878V1040M572 878V1022" stroke="#00d0d0" stroke-width="3" fill="none"/>
          <path d="M90 870H128M210 870H258L268 880M416 880L428 870H474M552 870H594M126 950H168M514 950H556M335 895V912H374M335 1000V990H372M82 1040H128M228 1040H258L268 1022M416 1022L428 1040H472M555 1040H603" stroke="#7c7c7c" stroke-width="2.5" fill="none"/>
        </g>

        <!-- rebar panels -->
        <svg x="478" y="417" width="173" height="155"><use href="#fillW"/></svg>
        <use href="#panel" transform="translate(478 417)"/>
        <use href="#ptitle" transform="translate(565 397)"/>
        <svg x="477" y="617" width="173" height="154"><use href="#fillW"/></svg>
        <use href="#panel" transform="translate(477 617) scale(1 .994)"/>
        <use href="#ptitle" transform="translate(565 598)"/>
        <path d="M471 660h5v12h-5zM471 694h5v14h-5zM471 732h5v14h-5z" fill="#e00000"/>
        <svg x="777" y="416" width="121" height="156"><use href="#fillW"/></svg>
        <use href="#panel" transform="translate(777 416) scale(.7 1.006)"/>
        <use href="#ptitle" transform="translate(836 398)"/>
        <svg x="777" y="617" width="123" height="154"><use href="#fillW"/></svg>
        <use href="#panel" transform="translate(777 617) scale(.71 .994)"/>
        <use href="#ptitle" transform="translate(837 598)"/>
        <path d="M771 660h5v12h-5zM771 694h5v14h-5zM771 732h5v14h-5z" fill="#e00000"/>
        <use href="#ptitle" transform="translate(565 793)"/>
        <use href="#low" transform="translate(440 780) scale(.3333)"/>
        <use href="#ptitle" transform="translate(838 793)"/>
        <use href="#low" transform="translate(751 780) scale(.23 .3333)"/>

        <!-- right group -->
        <g transform="translate(1140 370) scale(.3333)">
          <rect x="500" y="37" width="180" height="14" fill="#00ffff"/><rect x="500" y="53" width="180" height="3" fill="#00ffff"/><rect x="578" y="56" width="34" height="10" fill="#00ffff"/>
          <use href="#tri"/>
          <use href="#tri" x="400"/>
          <rect x="90" y="70" width="60" height="16" fill="#00ffff"/>
          <path d="M112 130H128V255L150 282H105V258Z" fill="#00a000"/>
          <path d="M118 130V250M100 288H160" stroke="#00ff00" stroke-width="4" stroke-dasharray="6 3"/>
          <path d="M50 130V300M72 125V308M50 130H72M50 300H72M100 325H148M100 350H132M128 100V130M162 205H105M162 225H105M175 255H130" stroke="#7c7c7c" stroke-width="3" fill="none"/>
          <path d="M112 98h18v10h-18zM112 112h18v10h-18zM140 115h22v10h-22zM60 186h10v40h-10zM42 207h10v12h-10zM80 170h24v10h-24zM72 212h34v18h-34zM138 192h30v10h-30zM138 215h34v8h-34zM140 237h32v10h-32zM80 252h24v10h-24zM145 252h36v10h-36zM160 260h26v10h-26zM60 280h10v8h-10zM75 270h14v14h-14zM72 292h10v8h-10zM112 305h20v12h-20zM118 320h14v10h-14zM165 292h20v10h-20zM182 280h12v10h-12zM70 128h10v14h-10z" fill="#00ffff"/>

          <rect x="255" y="490" width="138" height="16" fill="#00ffff"/><rect x="255" y="508" width="138" height="3" fill="#00ffff"/><rect x="310" y="511" width="34" height="8" fill="#00ffff"/>
          <path d="M195 590H275M195 607H275M195 740H275M195 757H275M195 888H275M195 905H275M195 1037H275M195 1053H275" stroke="#0000e0" stroke-width="3"/>
          <path d="M195 822H275M548 822H582" stroke="#900000" stroke-width="4"/>
          <path d="M192 570V808L204 808 186 834H200L192 838V1075" fill="none" stroke="#e8e8e8" stroke-width="2.5"/>
          <path d="M232 588V1055M248 588V1055M265 588V1055" stroke="#7c7c7c" stroke-width="3"/>
          <path d="M258 588V1055" stroke="#008080" stroke-width="6"/>
          <path d="M275 580L545 490V1150L275 1060Z" fill="url(#gridS3)"/>
          <path d="M470 515L545 490V1150L470 1125Z" fill="url(#gridO3)" opacity=".55"/>
          <path d="M275 580L545 490V1150L275 1060Z" fill="url(#magS)"/>
          <path d="M275 585L545 500V535L275 630Z" fill="url(#gridO3)"/>
          <path d="M275 1025L545 1110V1148L275 1060Z" fill="url(#gridO3)"/>
          <path d="M275 632L545 540M275 645L545 555" stroke="#e00000" stroke-width="3"/>
          <path d="M400 590L530 548M440 575H530M470 560H530" stroke="#f0e000" stroke-width="2"/>
          <path d="M275 580L545 490V1150L275 1060Z" fill="none" stroke="#e000e0" stroke-width="4"/>
          <path d="M275 590L540 505M275 1052L540 1140" stroke="#7c7c7c" stroke-width="3"/>
          <path d="M275 765H592M275 878H592M318 640V1040M530 520V1130M210 678H318M548 705H592M548 762H592M548 875H592M548 930H592M548 1035H592M548 580H592M592 515V1130H608V515H592M275 1148V1155H545M380 532V575M355 535H380" stroke="#7c7c7c" stroke-width="3" fill="none"/>
          <path d="M545 500V1140" stroke="#008888" stroke-width="4"/>
          <path d="M356 520h22v12h-22zM399 507h26v14h-26zM210 666h38v10h-38zM238 800h9v40h-9zM225 810h10v18h-10zM548 570h42v7h-42zM560 656h26v14h-26zM548 700h42v10h-42zM552 750h40v12h-40zM552 865h40v10h-40zM548 918h40v10h-40zM548 1023h40v10h-40zM583 800h10v40h-10zM596 810h10v18h-10zM594 560h10v40h-10zM585 520h10v12h-10zM582 1035h10v38h-10zM585 1105h10v16h-10zM237 1025h10v10h-10zM355 1098h24v12h-24zM395 1110h26v12h-26zM390 1137h42v10h-42zM404 1147h14v8h-14zM545 484h14v14h-14zM545 1134h14v14h-14z" fill="#00ffff"/>

          <rect x="365" y="1185" width="96" height="10" fill="#00ffff"/><rect x="365" y="1197" width="96" height="2" fill="#00ffff"/><rect x="400" y="1200" width="25" height="10" fill="#00ffff"/>
          <path d="M275 1215H548M275 1280H548M275 1276V1288M548 1276V1288M262 1232L535 1232M535 1232L565 1240M565 1232V1265M545 1232V1265" stroke="#7c7c7c" stroke-width="3" fill="none"/>
          <path d="M226 1237H505L530 1260H285L258 1252H226Z" fill="none" stroke="#d000d0" stroke-width="2"/>
          <path d="M240 1234H510M258 1252L285 1265H340M285 1252H510" stroke="#00ff00" stroke-width="3" stroke-dasharray="14 4" fill="none"/>
          <path d="M243 1215h24v10h-24zM425 1218h30v10h-30zM480 1218h28v8h-28zM510 1218h28v8h-28zM393 1250h14v14h-14zM456 1250h18v12h-18zM505 1258h20v8h-20zM525 1270h10v8h-10zM390 1272h10v6h-10zM300 1250h40v6h-40z" fill="#00ffff"/>
        </g>

        <!-- drawing limit line -->
        <path d="M1761.5 194V1021" stroke="#0000a8" stroke-width="1.5"/>

        <!-- crosshair -->
        <path d="M1585 552.5H1681M1633.5 503V600" stroke="#fff"/>
        <rect x="1621.5" y="540.5" width="24" height="24" fill="#000" stroke="#fff" stroke-width="1"/>

        <!-- viewcube -->
        <ellipse cx="1845" cy="276" rx="53" ry="54" fill="none" stroke="#2e2e2e" stroke-width="14"/>
        <rect x="1819" y="250" width="52" height="52" fill="#a8a8a8" stroke="#8a8a8a"/>
        <rect x="1829" y="260" width="32" height="32" fill="#9a9ba0"/>
        <text x="1845" y="281" text-anchor="middle" font-size="12" font-weight="700" fill="#3a3a3a">TOP</text>
        <g font-size="20" font-weight="700" fill="#8e8e8e" text-anchor="middle">
          <text x="1845" y="228">N</text><text x="1845" y="340">S</text><text x="1788" y="284">W</text><text x="1901" y="284">E</text>
        </g>
        <rect x="1821" y="363" width="48" height="17" rx="4" fill="#77777f"/>
        <text x="1829" y="375" font-size="11" fill="#3e3e44">WCS</text>
        <path d="M1856 369H1864L1860 374Z" fill="none" stroke="#a0a0a8"/>

        <!-- UCS icon -->
        <path d="M28.5 950V1000H79M24.5 995.5H33.5V1004.5H24.5Z" fill="none" stroke="#e8e8e8"/>
        <path d="M30 933L36.5 940 43 933M36.5 940V946M83 986L96 999M96 986L83 999" fill="none" stroke="#e8e8e8"/>
      </svg>

      <div class="absolute left-[3px] top-[5px] text-[12px] leading-4 text-[#e4e4e4] whitespace-nowrap">[−][Top][2D Wireframe]</div>

      <!-- command line -->
      <div class="absolute left-[642px] top-[775px] w-[636px] h-[51px] flex">
        <div class="w-[25px] bg-[#222933] flex flex-col items-center justify-between pt-[3px] pb-[2px]">
          <svg class="w-[18px] h-[6px]" viewBox="0 0 18 6"><path d="M0 0h2v2h-2zM4 0h2v2h-2zM8 0h2v2h-2zM12 0h2v2h-2zM16 0h2v2h-2zM0 4h2v2h-2zM4 4h2v2h-2zM8 4h2v2h-2zM12 4h2v2h-2zM16 4h2v2h-2z" fill="#9aa0a8"/></svg>
          <svg class="w-[10px] h-[10px]" viewBox="0 0 10 10"><path d="M1 1L9 9M9 1L1 9" stroke="#b8bcc2" stroke-width="1.8"/></svg>
          <svg class="w-[14px] h-[14px]" viewBox="0 0 14 14"><path d="M1 13L9 5C8 2 10 0 13 1L10.5 3.5 11 5 12.5 4 14 2C14 6 11 7 9.5 6.5L3 14Z" fill="#c0c4ca"/></svg>
        </div>
        <div class="flex-1 flex flex-col bg-[#adadad] font-['Liberation_Mono',monospace] text-[13.2px] whitespace-nowrap">
          <div class="h-[29px] flex items-end text-[#101010] pl-[2px] leading-[16px]">Command: Specify opposite corner or [Fence/WPolygon/CPolygon]: *Cancel*</div>
          <div class="h-[1px] bg-[#2a2f36]"></div>
          <div class="flex-1 flex items-center pl-[5px] pr-[3px] pt-px italic text-[#666]">
            <svg class="w-[15px] h-[12px]" viewBox="0 0 15 12"><path d="M.5.5H14.5V11.5H.5Z" fill="#8a8a8a" stroke="#3a3a3a"/><path d="M1 1H14V3H1Z" fill="#3a3a3a"/><path d="M3 5L5 7 3 9M7 9H10" fill="none" stroke="#fff"/></svg>
            <span class="ml-[3px] mr-[10px] border-x-[3px] border-t-[4px] border-x-transparent border-t-[#3a3a3a]"></span>
            <span class="flex-1">Type a command</span>
            <span class="border-x-[4px] border-b-[4px] border-x-transparent border-b-[#3a3a3a]"></span>
          </div>
        </div>
      </div>

      <!-- balloon -->
      <div class="absolute left-[1588px] top-[742px] w-[331px] h-[79px] z-10 rounded-[13px] bg-[#ffffe1] text-black whitespace-nowrap">
        <div class="h-[32px] flex items-center pl-[7px] pt-[3px]">
          <div class="w-[16px] h-[16px] rounded-full bg-[#2a5cc4] border border-[#9db4e0] text-white font-bold text-[12px] leading-[14px] text-center font-['Liberation_Serif',serif]">i</div>
          <span class="ml-[10px] font-bold text-[11.8px] w-[274px]">Unreconciled New Layers</span>
          <div class="w-[16px] h-[16px] bg-[#f2f2ea] border border-[#9a9a9a] flex items-center justify-center">
            <svg class="w-[9px] h-[9px]" viewBox="0 0 9 9"><path d="M1 1L8 8M8 1L1 8" stroke="#000" stroke-width="2"/></svg>
          </div>
        </div>
        <div class="pl-[15px] h-[21px] leading-[16px] text-[11.85px] text-[#111]">New layers were found that may need to be reconciled.</div>
        <a class="pl-[15px] block leading-[14px] text-[11.7px] text-[#0000ee] underline">View unreconciled new layers in Layer Properties Manager</a>
        <svg class="absolute left-[238px] top-[78px] w-[34px] h-[20px]" viewBox="0 0 34 20"><path d="M0 0L26 19 16 0Z" fill="#ffffe1"/></svg>
      </div>
    </div>

    <!-- status bar -->
    <footer class="h-[29px] bg-[#222933] border-t border-[#3b4453] flex items-center whitespace-nowrap text-[#eceff2]">
      <div class="w-[609px] h-[28px] flex items-start">
        <div class="w-[58px] h-[17px] ml-[12px] bg-[#323a48] rounded-b-md font-bold text-white text-center leading-[16px]">Model</div>
        <div class="w-[32px] h-[17px] ml-[3px] bg-[#2b323e] rounded-b-md text-[#b9bec5] text-center leading-[16px]">3x3</div>
        <div class="w-[20px] h-[15px] ml-[13px] bg-[#2b323e] rounded-b-md flex items-center justify-center">
          <svg class="w-[9px] h-[9px]" viewBox="0 0 9 9"><path d="M4.5 0V9M0 4.5H9" stroke="#b9bec5" stroke-width="1.6"/></svg>
        </div>
      </div>
      <div class="w-[179px] h-6 bg-[#3b4453] flex items-center justify-center mr-1">-1066600.99, -1381972.27, 0.00</div>
      <div class="w-[46px] h-6 bg-[#3b4453] flex items-center justify-center mr-1">MODEL</div>
      <div class="w-[63px] h-6 bg-[#3b4453] flex items-center pl-[3px] mr-1 gap-[6px]">
        <svg class="w-4 h-4" viewBox="0 0 16 16"><path d="M4 0V16M8 0V16M12 0V16M0 4H16M0 8H16M0 12H16" stroke="#dfe3e8"/></svg>
        <svg class="w-4 h-4" viewBox="0 0 16 16"><path d="M2 2h2v2h-2zM7 2h2v2h-2zM12 2h2v2h-2zM2 7h2v2h-2zM7 7h2v2h-2zM12 7h2v2h-2zM2 12h2v2h-2zM7 12h2v2h-2zM12 12h2v2h-2z" fill="#dfe3e8"/></svg>
        <span class="ml-[2px] border-x-4 border-t-4 border-x-transparent border-t-[#c8ccd2]"></span>
      </div>
      <div class="w-[22px] h-6 bg-[#3b4453] flex items-center justify-center mr-1">
        <svg class="w-4 h-4" viewBox="0 0 16 16"><path d="M1 9H8V16H1Z" fill="#e4e4e4"/><path d="M8.5 8V1H15V7.5H8.5" fill="none" stroke="#e4e4e4"/></svg>
      </div>
      <div class="w-[22px] h-6 bg-[#5a8fc4] flex items-center justify-center mr-[2px]">
        <svg class="w-4 h-4" viewBox="0 0 16 16"><path d="M4 2V8M1 5H7" stroke="#fff" stroke-width="1.4"/><path d="M6 10H16V15H6Z" fill="#fff"/></svg>
      </div>
      <div class="w-[104px] h-6 bg-[#3b4453] flex items-center pl-[3px] mr-[2px]">
        <svg class="w-4 h-4" viewBox="0 0 16 16"><path d="M2 0V14H16M2 10H6V14" fill="none" stroke="#dfe3e8"/></svg>
        <svg class="w-4 h-4 ml-[7px]" viewBox="0 0 16 16"><circle cx="7" cy="9" r="6" fill="none" stroke="#c8ccd2"/><path d="M7 9L14 1M3 15H15" stroke="#c8ccd2"/></svg>
        <span class="ml-[4px] border-x-4 border-t-4 border-x-transparent border-t-[#c8ccd2]"></span>
        <svg class="w-4 h-4 ml-[7px]" viewBox="0 0 16 16"><path d="M3 1L13 15" stroke="#e05a5a"/><path d="M10 1L6 15" stroke="#5cc060"/><circle cx="8" cy="8" r="1.8" fill="#e4e4e4"/></svg>
        <span class="ml-[5px] border-x-4 border-t-4 border-x-transparent border-t-[#c8ccd2]"></span>
      </div>
      <div class="w-[22px] h-6 bg-[#5a8fc4] flex items-center justify-center mr-[2px]">
        <svg class="w-4 h-4" viewBox="0 0 16 16"><path d="M2 14L13 3M1 14H15M7 8Q10 10 10 14" fill="none" stroke="#fff" stroke-width="1.3"/></svg>
      </div>
      <div class="w-[22px] h-6 bg-[#5a8fc4] flex items-center justify-center">
        <svg class="w-4 h-4" viewBox="0 0 16 16"><path d="M4 3H15V15H4ZM1 1H5V5H1Z" fill="#5a8fc4" stroke="#fff"/></svg>
      </div>
      <div class="w-[16px] h-6 bg-[#3b4453] flex items-center justify-center mr-[3px]"><span class="border-x-4 border-t-4 border-x-transparent border-t-[#c8ccd2]"></span></div>
      <div class="w-[23px] h-6 bg-[#3b4453] flex items-center justify-center mr-px">
        <svg class="w-4 h-4" viewBox="0 0 16 16"><path d="M0 2H16V5H0ZM0 7H11V10H0ZM0 12H8V15H0Z" fill="#dfe3e8"/></svg>
      </div>
      <div class="w-[23px] h-6 bg-[#5a8fc4] flex items-center justify-center mr-[2px]">
        <svg class="w-4 h-4" viewBox="0 0 16 16"><rect width="16" height="16" fill="#fff"/><path d="M2 2h3v3h-3zM8 2h3v3h-3zM5 5h3v3h-3zM11 5h3v3h-3zM2 8h3v3h-3zM8 8h3v3h-3zM5 11h3v3h-3zM11 11h3v3h-3z" fill="#3b6ea5"/></svg>
      </div>
      <div class="w-[24px] h-6 bg-[#3b4453] flex items-center justify-center mr-px">
        <svg class="w-4 h-4" viewBox="0 0 16 16"><path d="M6 6H16V16H6Z" fill="#7fd09a"/><path d="M3 0V6M0 3H6" stroke="#fff"/></svg>
      </div>
      <div class="w-[40px] h-6 bg-[#3b4453] flex items-center pl-[2px] mr-[3px]">
        <svg class="w-4 h-4" viewBox="0 0 16 16"><path d="M3 5L7 1H15V10L11 14H3ZM3 5H11V14M11 5L15 1" fill="none" stroke="#dfe3e8"/><path d="M1 11H5V15H1Z" fill="#3b4453" stroke="#e8963c"/></svg>
        <span class="ml-[4px] border-x-4 border-t-4 border-x-transparent border-t-[#c8ccd2]"></span>
      </div>
      <div class="w-[24px] h-6 bg-[#5a8fc4] flex items-center justify-center">
        <svg class="w-4 h-4" viewBox="0 0 16 16"><path d="M2 1V14H15" fill="none" stroke="#fff" stroke-width="1.3"/><path d="M9 2L13 6H10L12 10 7 6H10Z" fill="#fff"/><path d="M0 3L2 0 4 3Z" fill="#fff"/></svg>
      </div>
      <div class="w-[38px] h-6 bg-[#3b4453] flex items-center pl-[3px] mr-[2px]">
        <svg class="w-4 h-4" viewBox="0 0 16 16"><path d="M3 1H13L15 3V13L13 15H3L1 13V3Z" fill="none" stroke="#8cc8f5" stroke-dasharray="3 2"/><path d="M0 0h3v3h-3zM13 13h3v3h-3z" fill="#5ab0f0"/></svg>
        <span class="ml-[3px] border-x-4 border-t-4 border-x-transparent border-t-[#c8ccd2]"></span>
      </div>
      <div class="w-[22px] h-6 bg-[#5a8fc4] flex items-center justify-center">
        <svg class="w-4 h-4" viewBox="0 0 16 16"><path d="M8 1L15 5V12L8 15 1 12V5ZM8 8V15M8 8L1 5M8 8L15 5" fill="none" stroke="#fff"/></svg>
      </div>
      <div class="w-[16px] h-6 bg-[#3b4453] flex items-center justify-center mr-[5px]"><span class="border-x-4 border-t-4 border-x-transparent border-t-[#c8ccd2]"></span></div>
      <div class="w-[22px] h-6 bg-[#5a8fc4] flex items-center justify-center">
        <svg class="w-4 h-4" viewBox="0 0 16 16"><path d="M7 1L9 7 14 15 8 11 6 15H2L6 9Z" fill="#fff"/><circle cx="12" cy="4" r="2" fill="none" stroke="#fff"/></svg>
      </div>
      <div class="w-[48px] h-6 bg-[#3b4453] flex items-center pl-[2px] gap-[7px] mr-[4px]">
        <svg class="w-4 h-4" viewBox="0 0 16 16"><path d="M7 1L9 7 14 15 8 11 6 15H2L6 9Z" fill="#cfd3d8"/><path d="M11 1L13 3 15 1" fill="none" stroke="#cfd3d8"/></svg>
        <svg class="w-4 h-4" viewBox="0 0 16 16"><path d="M8 1L10 7 15 15 8 11 1 15 6 7Z" fill="#cfd3d8"/></svg>
      </div>
      <div class="w-[70px] h-6 bg-[#3b4453] flex items-center mr-[4px]">
        <span class="w-[57px] text-center">1:1 / 100%</span>
        <span class="ml-[1px] border-x-4 border-t-4 border-x-transparent border-t-[#c8ccd2]"></span>
      </div>
      <div class="w-[40px] h-6 bg-[#3b4453] flex items-center pl-[3px] mr-[2px]">
        <svg class="w-4 h-4" viewBox="0 0 16 16"><circle cx="8" cy="8" r="4.5" fill="none" stroke="#dfe3e8" stroke-width="3"/><path d="M8 0V3M8 13V16M0 8H3M13 8H16M2 2L4 4M12 12L14 14M2 14L4 12M12 4L14 2" stroke="#dfe3e8" stroke-width="2.2"/></svg>
        <span class="ml-[6px] border-x-4 border-t-4 border-x-transparent border-t-[#c8ccd2]"></span>
      </div>
      <div class="w-[22px] h-6 bg-[#3b4453] flex items-center justify-center mr-[5px]">
        <svg class="w-4 h-4" viewBox="0 0 16 16"><path d="M8 0V16M0 8H16" stroke="#e8e8e8" stroke-width="1.6"/></svg>
      </div>
      <div class="w-[95px] h-6 bg-[#3b4453] flex items-center pl-[7px] mr-[2px]">
        <svg class="w-[10px] h-4" viewBox="0 0 10 16"><path d="M0 0H10V16H0Z" fill="#c4c8ce"/><path d="M5 3H10M7 6H10M5 9H10M7 12H10" stroke="#3b4453"/></svg>
        <span class="ml-[11px] w-[52px]">Decimal</span>
        <span class="ml-[3px] border-x-4 border-t-4 border-x-transparent border-t-[#c8ccd2]"></span>
      </div>
      <div class="w-[24px] h-6 bg-[#3b4453] flex items-center justify-center mr-[3px]">
        <svg class="w-[14px] h-4" viewBox="0 0 14 16"><path d="M.5.5H13.5V15.5H.5Z" fill="none" stroke="#dfe3e8"/><path d="M3 4H5M7 4H11M3 8H5M7 8H11M3 12H5M7 12H11" stroke="#dfe3e8"/></svg>
      </div>
      <div class="w-[39px] h-6 bg-[#3b4453] flex items-center pl-[3px] mr-[2px]">
        <svg class="w-4 h-4" viewBox="0 0 16 16"><path d="M1 1H15V5H1ZM1 5V14H8M15 5V8" fill="none" stroke="#dfe3e8"/><path d="M10 11H16V16H10Z" fill="#dfe3e8"/></svg>
        <span class="ml-[3px] border-x-4 border-t-4 border-x-transparent border-t-[#c8ccd2]"></span>
      </div>
      <div class="w-[25px] h-6 bg-[#3b4453] flex items-center justify-center mr-[3px]">
        <svg class="w-4 h-4" viewBox="0 0 16 16"><path d="M1 1H7V7H1ZM5 15L8 9 11 15Z" fill="none" stroke="#dfe3e8"/><circle cx="12.5" cy="4.5" r="2.5" fill="none" stroke="#dfe3e8"/></svg>
      </div>
      <div class="w-[23px] h-6 bg-[#5a8fc4] flex items-center justify-center mr-[3px]">
        <svg class="w-[18px] h-[18px]" viewBox="0 0 18 18"><circle cx="9" cy="9" r="7.5" fill="#7aa8d4" stroke="#fff" stroke-width="1.5"/><path d="M5 13L13 5" stroke="#fff" stroke-width="1.6"/></svg>
      </div>
      <div class="w-[76px] h-6 bg-[#3b4453] flex items-center pl-[3px] gap-[6px] mr-[3px]">
        <svg class="w-[18px] h-[18px]" viewBox="0 0 18 18"><path d="M3 5L9 1 15 5V12L9 16 3 12Z" fill="#3a6ea8"/><path d="M1 10H7V16H1Z" fill="#e8b030"/><path d="M8 12L11 16 17 8" fill="none" stroke="#5cc060" stroke-width="2.2"/><path d="M9 1V9H15" stroke="#fff"/></svg>
        <svg class="w-4 h-[18px]" viewBox="0 0 16 18"><path d="M5 6H11L15 10V17H5Z" fill="none" stroke="#e8b080" stroke-width="1.2"/><path d="M3 3A2 2 0 0 1 7 3V11A1 1 0 0 1 5 11V4" fill="none" stroke="#e8b080"/></svg>
        <svg class="w-[18px] h-[18px] ml-[2px]" viewBox="0 0 18 18"><path d="M2 3H13M2 7H9M2 11H7" stroke="#dfe3e8"/><path d="M11 1L7 9" stroke="#dfe3e8"/><path d="M12 6L18 17H6Z" fill="#f0a050"/><path d="M12 10V13M12 14.5V16" stroke="#3b4453"/></svg>
      </div>
      <div class="w-[24px] h-6 bg-[#3b4453] flex items-center justify-center mr-[2px]">
        <svg class="w-4 h-[14px]" viewBox="0 0 16 14"><path d="M.5.5H15.5V13.5H.5Z" fill="none" stroke="#dfe3e8"/><path d="M3 11L7 7M3 8V11H6M13 3L9 7M13 6V3H10" fill="none" stroke="#dfe3e8"/></svg>
      </div>
      <div class="w-[21px] h-6 bg-[#3b4453] flex items-center justify-center">
        <svg class="w-4 h-4" viewBox="0 0 16 16"><path d="M0 2H16M0 8H16M0 14H16" stroke="#dfe3e8" stroke-width="2"/></svg>
      </div>
    </footer>
  </main>
</div>

<!-- tips of the taskbar icons -->
<div class="h-2 flex items-end">
  <div class="w-px h-2 ml-[3px] bg-[#777]"></div>
  <div class="w-[8px] h-[2px] ml-[25px] bg-[#d8d8d8]"></div>
  <div class="w-[8px] h-[2px] ml-[30px] bg-[#e0e0e0]"></div>
  <div class="w-[13px] h-[3px] ml-[48px] bg-[#1f9a5f]"></div>
  <div class="w-[13px] h-[3px] ml-[22px] bg-[#c8285a]"></div>
  <div class="w-[8px] h-[3px] ml-[25px] bg-[#b03020]"></div>
  <div class="w-[36px] h-2 ml-[91px] bg-[#333] flex justify-center items-end"><div class="w-4 h-[2px] bg-white"></div></div>
</div>
</body>
</html>
